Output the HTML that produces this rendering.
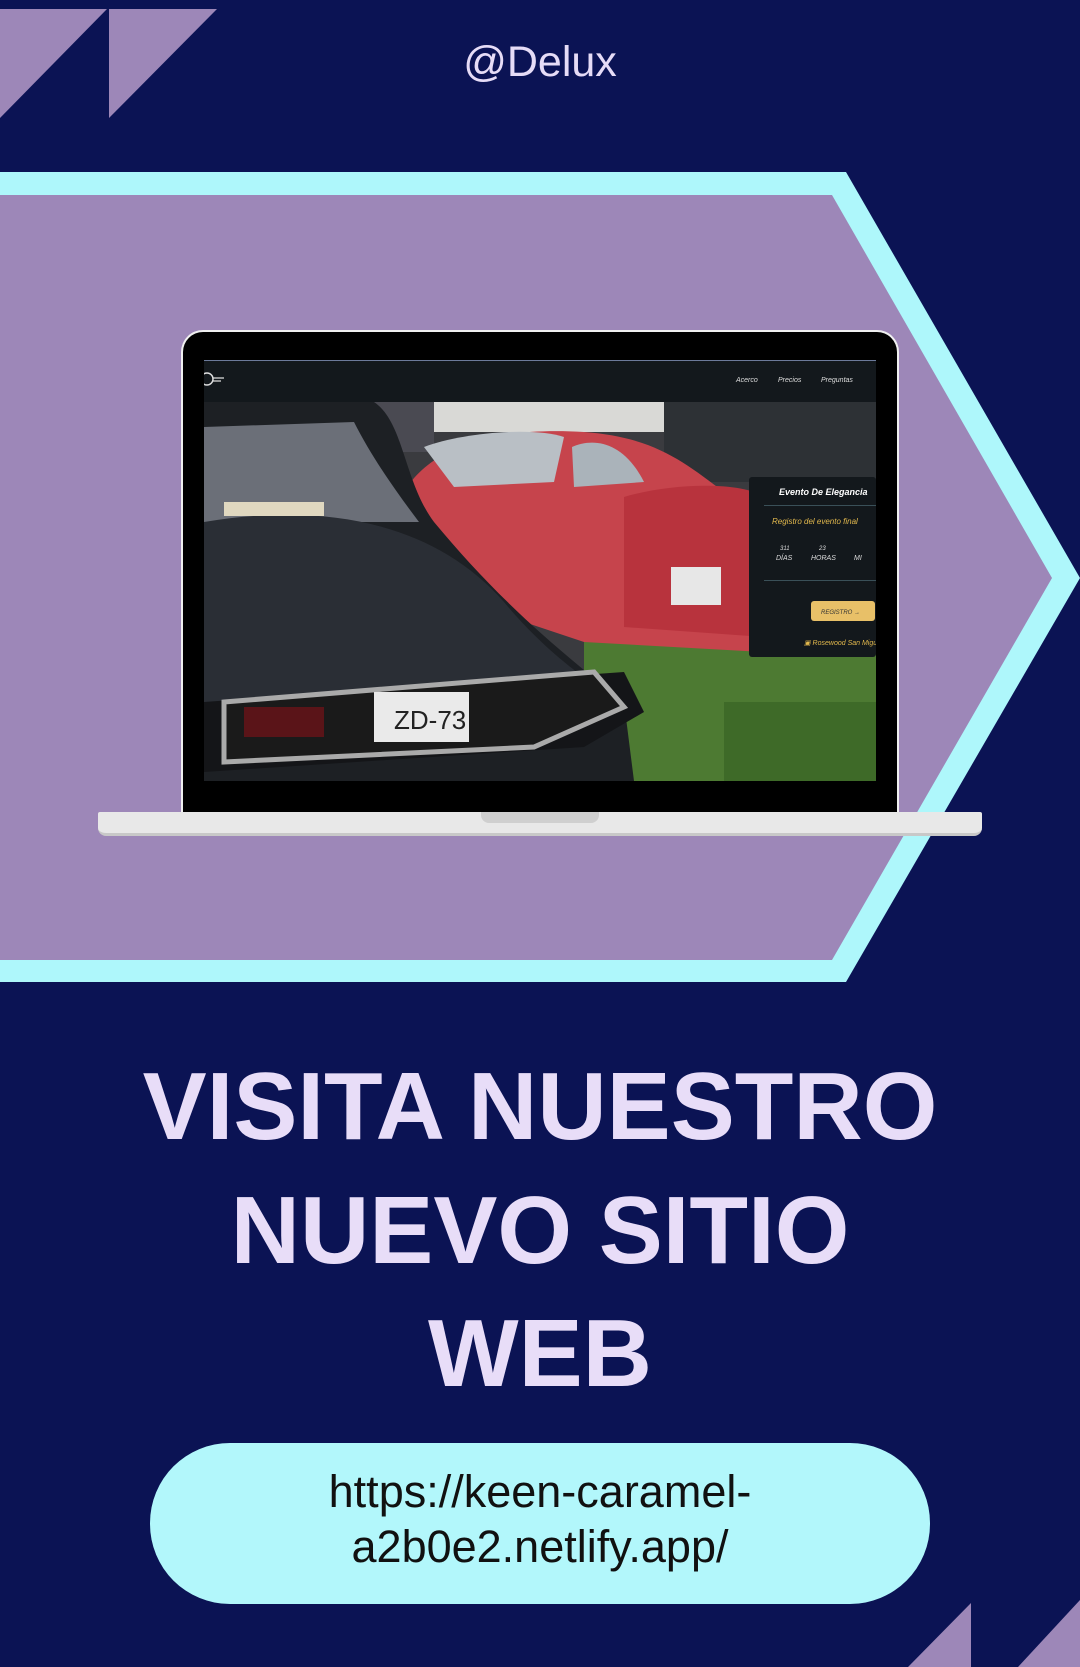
<!DOCTYPE html>
<html><head><meta charset="utf-8"><style>
html,body{margin:0;padding:0}
body{width:1080px;height:1667px;background:#0b1354;position:relative;overflow:hidden;font-family:"Liberation Sans",sans-serif}
.abs{position:absolute}
.h{position:absolute;left:0;width:1080px;text-align:center;color:#e8ddf8;font-weight:bold;font-size:96px;line-height:96px;letter-spacing:0px}
</style></head><body>
<svg class="abs" style="left:0;top:0" width="1080" height="1667">
  <polygon points="0,9 107,9 0,118" fill="#9d87b8"/>
  <polygon points="109,9 217,9 109,118" fill="#9d87b8"/>
  <polygon points="0,172 846,172 1080,578 846,982 0,982" fill="#aef7fb"/>
  <polygon points="0,195 832,195 1052,578 832,960 0,960" fill="#9d87b8"/>
  <polygon points="971,1603 971,1667 908,1667" fill="#9d87b8"/>
  <polygon points="1080,1600 1080,1667 1018,1667" fill="#9d87b8"/>
</svg>
<div class="abs" style="left:0;width:1080px;top:34px;text-align:center;color:#e6dcf7;font-size:43px;line-height:56px">@Delux</div>

<!-- laptop -->
<div class="abs" style="left:181px;top:330px;width:718px;height:490px;background:#000;border:2px solid #f0f0f0;border-bottom:none;border-radius:22px 22px 0 0;box-sizing:border-box"></div>
<div class="abs" style="left:98px;top:812px;width:884px;height:21px;background:#e8e8e8;border-radius:2px 2px 8px 8px;border-bottom:3px solid #c8c8c8"></div>
<div class="abs" style="left:481px;top:812px;width:118px;height:11px;background:#cfcfcf;border-radius:0 0 8px 8px"></div>

<svg class="abs" style="left:204px;top:360px" width="672" height="421" viewBox="0 0 672 421">
  <rect width="672" height="421" fill="#2a2a2c"/>
  <rect width="672" height="42" fill="#13181c"/>
  <rect width="672" height="1" fill="#6c7a9a"/>
  <circle cx="3" cy="19" r="6" fill="none" stroke="#ddd" stroke-width="1.5"/>
  <path d="M9 18 H20 M9 21 H17" stroke="#ddd" stroke-width="1.3"/>
  <text x="532" y="22" fill="#ddd" font-size="7" font-style="italic">Acerco</text>
  <text x="574" y="22" fill="#ddd" font-size="7" font-style="italic">Precios</text>
  <text x="617" y="22" fill="#ddd" font-size="7" font-style="italic">Preguntas</text>
  <g transform="translate(0,42)">
    <rect width="672" height="379" fill="#3a3b3f"/>
    <rect x="220" y="0" width="240" height="30" fill="#d9d9d6"/>
    <rect x="150" y="0" width="80" height="50" fill="#4a4a52"/>
    <rect x="460" y="0" width="212" height="80" fill="#2d3135"/>
    <rect x="380" y="225" width="292" height="154" fill="#4d7a32"/>
    <rect x="520" y="300" width="152" height="79" fill="#3e6a28"/>
    <path d="M200 90 C230 40 300 25 380 30 C450 35 480 60 520 90 L560 110 L560 250 L380 240 L260 200 Z" fill="#c6444c"/>
    <path d="M420 95 C470 80 540 80 560 95 L560 235 L420 225 Z" fill="#b8333d"/>
    <path d="M220 45 C260 30 330 25 360 35 L350 80 L250 85 Z" fill="#b9bfc5"/>
    <path d="M368 45 C390 35 420 40 440 80 L370 85 Z" fill="#aab3ba"/>
    <rect x="467" y="165" width="50" height="38" fill="#e7e7e7"/>
    <path d="M0 0 L170 0 C200 20 200 80 230 120 C280 180 330 230 420 300 L430 379 L0 379 Z" fill="#1d2024"/>
    <path d="M0 25 L150 20 C170 60 200 100 215 120 L0 120 Z" fill="#6b6f78"/>
    <path d="M0 120 C120 100 230 120 300 200 C350 260 400 290 420 300 L0 300 Z" fill="#2a2e35"/>
    <path d="M0 300 L420 270 L440 310 L380 345 L0 370 Z" fill="#141518"/>
    <path d="M20 300 L390 270 L420 305 L330 345 L20 360 Z" fill="#1a1a1a" stroke="#aaa" stroke-width="5"/>
    <rect x="170" y="290" width="95" height="50" fill="#eaeaea"/>
    <text x="190" y="327" fill="#222" font-size="26">ZD-73</text>
    <rect x="40" y="305" width="80" height="30" fill="#5a1418"/>
    <rect x="20" y="100" width="100" height="14" fill="#e0d8c0"/>
  </g>
  <rect x="545" y="117" width="127" height="180" rx="3" fill="#13181c"/>
  <text x="575" y="135" fill="#fff" font-size="9" font-style="italic" font-weight="bold">Evento De Elegancia</text>
  <rect x="560" y="145" width="112" height="1" fill="#3a5058"/>
  <text x="568" y="164" fill="#e3b94d" font-size="8" font-style="italic">Registro del evento final</text>
  <text x="576" y="190" fill="#ddd" font-size="6" font-style="italic">311</text>
  <text x="572" y="200" fill="#ddd" font-size="7" font-style="italic">DÍAS</text>
  <text x="615" y="190" fill="#ddd" font-size="6" font-style="italic">23</text>
  <text x="607" y="200" fill="#ddd" font-size="7" font-style="italic">HORAS</text>
  <text x="650" y="200" fill="#ddd" font-size="7" font-style="italic">MI</text>
  <rect x="560" y="220" width="112" height="1" fill="#3a5058"/>
  <rect x="607" y="241" width="64" height="20" rx="3" fill="#e8c068"/>
  <text x="617" y="254" fill="#333" font-size="6" font-style="italic">REGISTRO →</text>
  <text x="600" y="285" fill="#e3b94d" font-size="7" font-style="italic">▣ Rosewood San Miguel</text>
</svg>

<div class="h" style="top:1059px">VISITA NUESTRO</div>
<div class="h" style="top:1183px">NUEVO SITIO</div>
<div class="h" style="top:1306px">WEB</div>

<div class="abs" style="left:150px;top:1443px;width:780px;height:161px;background:#b2f7fb;border-radius:80px;text-align:center;color:#111;font-size:45px;line-height:55px;box-sizing:border-box;padding-top:21px">https://keen-caramel-<br>a2b0e2.netlify.app/</div>
</body></html>
